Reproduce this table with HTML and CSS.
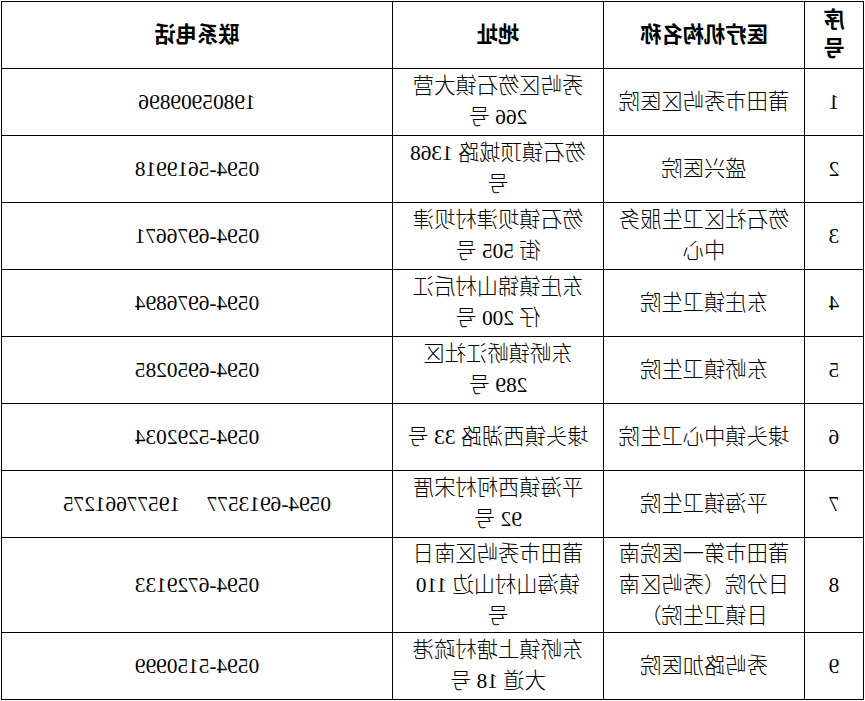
FILE: index.html
```html
<!DOCTYPE html>
<html lang="zh">
<head>
<meta charset="utf-8">
<title>医疗机构</title>
<link rel="stylesheet" href="styles.css">
</head>
<body>
<table class="grid">
  <colgroup>
    <col class="c-no">
    <col class="c-name">
    <col class="c-addr">
    <col class="c-tel">
  </colgroup>
  <thead>
    <tr><th>序<br>号</th><th>医疗机构名称</th><th>地址</th><th>联系电话</th></tr>
  </thead>
  <tbody>
    <tr><td>1</td><td>莆田市秀屿区医院</td><td>秀屿区笏石镇大营<br>266 号</td><td>19805909896</td></tr>
    <tr><td>2</td><td>盛兴医院</td><td>笏石镇顶城路 1368<br>号</td><td>0594-5619918</td></tr>
    <tr><td>3</td><td>笏石社区卫生服务<br>中心</td><td>笏石镇坝津村坝津<br>街 505 号</td><td>0594-6976671</td></tr>
    <tr><td>4</td><td>东庄镇卫生院</td><td>东庄镇锦山村后江<br>仔 200 号</td><td>0594-6976894</td></tr>
    <tr><td>5</td><td>东峤镇卫生院</td><td>东峤镇峤江社区<br>289 号</td><td>0594-6950285</td></tr>
    <tr><td>6</td><td>埭头镇中心卫生院</td><td>埭头镇西湖路 33 号</td><td>0594-5292034</td></tr>
    <tr><td>7</td><td>平海镇卫生院</td><td>平海镇西柯村宋厝<br>92 号</td><td>0594-6913577&emsp;&nbsp;19577661275</td></tr>
    <tr class="tall"><td>8</td><td>莆田市第一医院南<br>日分院（秀屿区南<br>日镇卫生院）</td><td>莆田市秀屿区南日<br>镇海山村山边 110<br>号</td><td>0594-6729133</td></tr>
    <tr><td>9</td><td>秀屿路加医院</td><td>东峤镇上塘村疏港<br>大道 18 号</td><td>0594-5150999</td></tr>
  </tbody>
</table>
</body>
</html>
```
FILE: styles.css
```css
html, body {
  margin: 0;
  padding: 0;
  background: #fff;
}

body {
  padding: 1px 0 0 1px;
}

.grid {
  width: 862px;
  table-layout: fixed;
  border-collapse: collapse;
  transform: scaleX(-1);
  font-family: "Liberation Serif", "Noto Sans CJK SC", serif;
  font-size: 21.3px;
  font-weight: 300;
  line-height: 31px;
  color: #000;
}

.c-no { width: 59px; }
.c-name { width: 201px; }
.c-addr { width: 211px; }
.c-tel { width: 391px; }

.grid th,
.grid td {
  border: 1.5px solid #000;
  height: 66px;
  padding: 0 8px;
  text-align: center;
  vertical-align: middle;
}

.grid th {
  font-weight: 700;
  line-height: 29px;
}

.grid .tall td {
  height: 94px;
}
```
